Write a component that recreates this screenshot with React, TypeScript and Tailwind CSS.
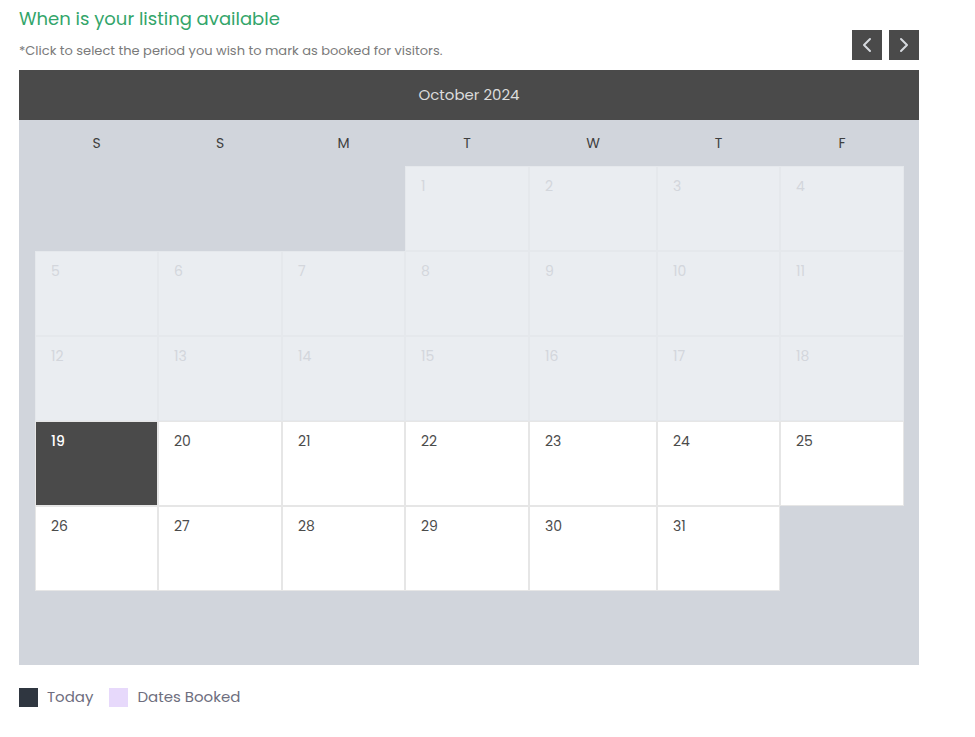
import React from 'react';
import { ChevronLeft, ChevronRight } from 'lucide-react';

const WEEKDAYS = ['S', 'S', 'M', 'T', 'W', 'T', 'F'];
const TODAY = 19;
const LEAD = 3; // October 2024 starts on Tuesday in a Sat-first week
const DAYS = 31;

type Cell = { day: number | null };

function buildCells(): Cell[] {
  const cells: Cell[] = [];
  for (let i = 0; i < LEAD; i++) cells.push({ day: null });
  for (let d = 1; d <= DAYS; d++) cells.push({ day: d });
  return cells;
}

function DayCell({ day }: { day: number | null }) {
  if (day === null) return <div className="h-[85px]" />;
  if (day < TODAY) {
    return (
      <div className="h-[85px] border border-[#e5e8ec] bg-[#eaedf1] px-[15px] pt-[9px] text-[14px] text-[#d3d6dc]">
        {day}
      </div>
    );
  }
  if (day === TODAY) {
    return (
      <div className="h-[85px] border border-[#e6e6e6] bg-[#4a4a4a] px-[15px] pt-[9px] text-[14px] font-medium text-white">
        {day}
      </div>
    );
  }
  return (
    <div className="h-[85px] border border-[#e6e6e6] bg-white px-[15px] pt-[9px] text-[14px] text-[#4b4b4b]">
      {day}
    </div>
  );
}

// column tracks shared by the weekday header and the day grid
const COLS = 'grid grid-cols-[123px_124px_123px_124px_128px_123px_124px]';

export default function App() {
  const cells = buildCells();

  return (
    <div className="min-h-screen bg-white pl-[19px] pt-[6px] font-['Poppins','Noto_Sans',sans-serif]">
      <div className="w-[900px]">
        <h2 className="text-[18px] leading-[26px] text-[#33a56a]">When is your listing available</h2>
        <div className="flex items-end justify-between">
          <p className="mb-[11px] text-[13px] leading-[16px] text-[#7a7a7a]">
            *Click to select the period you wish to mark as booked for visitors.
          </p>
          <div className="-mt-[2px] mb-[10px] flex gap-[7px]">
            <button className="flex h-[30px] w-[30px] items-center justify-center bg-[#4a4a4a] text-[#d6d9de]">
              <ChevronLeft size={24} strokeWidth={2} />
            </button>
            <button className="flex h-[30px] w-[30px] items-center justify-center bg-[#4a4a4a] text-[#d6d9de]">
              <ChevronRight size={24} strokeWidth={2} />
            </button>
          </div>
        </div>

        <div className="bg-[#d1d5dc]">
          <div className="flex h-[50px] items-center justify-center bg-[#4a4a4a] text-[15px] text-[#dcdcdc]">
            October 2024
          </div>
          <div className="pb-[74px] pl-4 pr-[15px]">
            <div className={`${COLS} h-[46px] items-center text-center text-[14px] text-[#3f3f3f]`}>
              {WEEKDAYS.map((w, i) => (
                <span key={i}>{w}</span>
              ))}
            </div>
            <div className={COLS}>
              {cells.map((c, i) => (
                <DayCell key={i} day={c.day} />
              ))}
            </div>
          </div>
        </div>

        <div className="mt-[21px] flex items-center text-[15px] text-[#6e6e7e]">
          <span className="h-[19px] w-[19px] bg-[#2f3640]" />
          <span className="ml-[9px]">Today</span>
          <span className="ml-[16px] h-[19px] w-[19px] bg-[#e7d9fb]" />
          <span className="ml-[9px]">Dates Booked</span>
        </div>
      </div>
    </div>
  );
}
